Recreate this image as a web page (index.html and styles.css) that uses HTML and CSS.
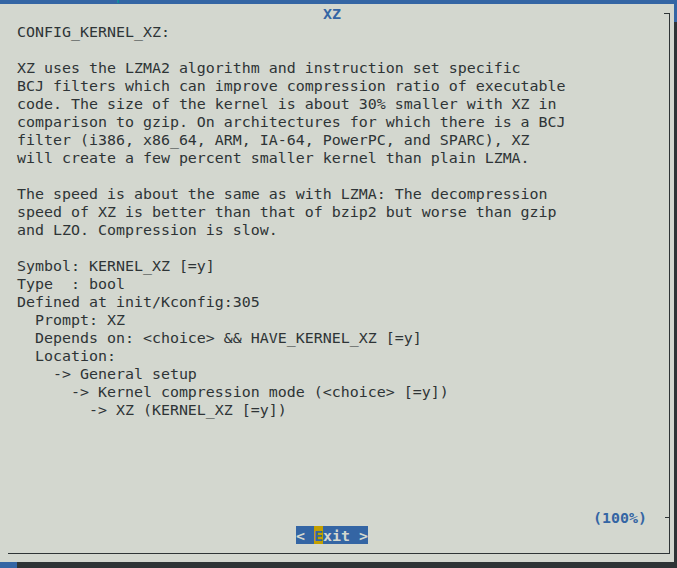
FILE: index.html
```html
<!DOCTYPE html>
<html>
<head>
<meta charset="utf-8">
<link rel="stylesheet" href="styles.css">
</head>
<body>
<div class="crumb"><span class="crumb-text">General setup</span></div>
<div class="dialog">
  <div class="frame"></div>
  <div class="title">XZ</div>
<pre class="help">CONFIG_KERNEL_XZ:

XZ uses the LZMA2 algorithm and instruction set specific
BCJ filters which can improve compression ratio of executable
code. The size of the kernel is about 30% smaller with XZ in
comparison to gzip. On architectures for which there is a BCJ
filter (i386, x86_64, ARM, IA-64, PowerPC, and SPARC), XZ
will create a few percent smaller kernel than plain LZMA.

The speed is about the same as with LZMA: The decompression
speed of XZ is better than that of bzip2 but worse than gzip
and LZO. Compression is slow.

Symbol: KERNEL_XZ [=y]
Type  : bool
Defined at init/Kconfig:305
  Prompt: XZ
  Depends on: &lt;choice&gt; &amp;&amp; HAVE_KERNEL_XZ [=y]
  Location:
    -&gt; General setup
      -&gt; Kernel compression mode (&lt;choice&gt; [=y])
        -&gt; XZ (KERNEL_XZ [=y])</pre>
  <div class="pct">(100%)</div>
  <div class="buttons"><span class="btn">&lt; <span class="key">E</span>xit &gt;</span></div>
</div>
</body>
</html>
```
FILE: styles.css
```css
html, body {
  margin: 0;
  padding: 0;
}
body {
  background: #3465a4;
  width: 677px;
  height: 568px;
  overflow: hidden;
  font-family: "DejaVu Sans Mono", monospace;
  font-size: 14.95px;
  line-height: 18px;
  color: #2e3436;
}
.crumb {
  height: 4px;
  overflow: hidden;
  padding-left: 8px;
}
.crumb-text {
  display: block;
  margin-top: -14px;
  color: #06989a;
  white-space: pre;
}
.dialog {
  position: relative;
  margin-left: -1px;
  width: 675px;
  height: 558px;
  background: #d3d7cf;
  box-shadow: 18px 18px 0 #2e3436;
  display: flex;
  flex-direction: column;
}
.frame {
  position: absolute;
  top: 9px;
  left: 9px;
  right: 4px;
  bottom: 8px;
  border-right: 1px solid #2e3436;
  border-bottom: 1px solid #2e3436;
}
.frame::before {
  content: "";
  position: absolute;
  top: 0;
  right: 0;
  width: 5px;
  height: 1px;
  background: #2e3436;
}
.frame::after {
  content: "";
  position: absolute;
  top: 504px;
  right: 0;
  width: 4px;
  height: 1px;
  background: #2e3436;
}
.title {
  box-sizing: border-box;
  height: 18px;
  padding-top: 1px;
  padding-left: 324px;
  color: #3465a4;
  font-weight: bold;
  position: relative;
}
.help {
  margin: 0;
  padding-top: 1px;
  padding-left: 18px;
  font: inherit;
  line-height: 18px;
  color: #2e3436;
  position: relative;
}
.pct {
  box-sizing: border-box;
  margin-top: 89px;
  height: 18px;
  padding-top: 1px;
  padding-left: 594px;
  color: #3465a4;
  font-weight: bold;
  position: relative;
}
.buttons {
  height: 18px;
  padding-left: 297px;
  position: relative;
}
.btn {
  display: inline-block;
  vertical-align: top;
  height: 18px;
  line-height: 20px;
  background: #3465a4;
  color: #d3d7cf;
  font-weight: bold;
  white-space: pre;
}
.key {
  display: inline-block;
  vertical-align: top;
  height: 18px;
  line-height: 20px;
  background: #c4a000;
  color: #3465a4;
}
```
